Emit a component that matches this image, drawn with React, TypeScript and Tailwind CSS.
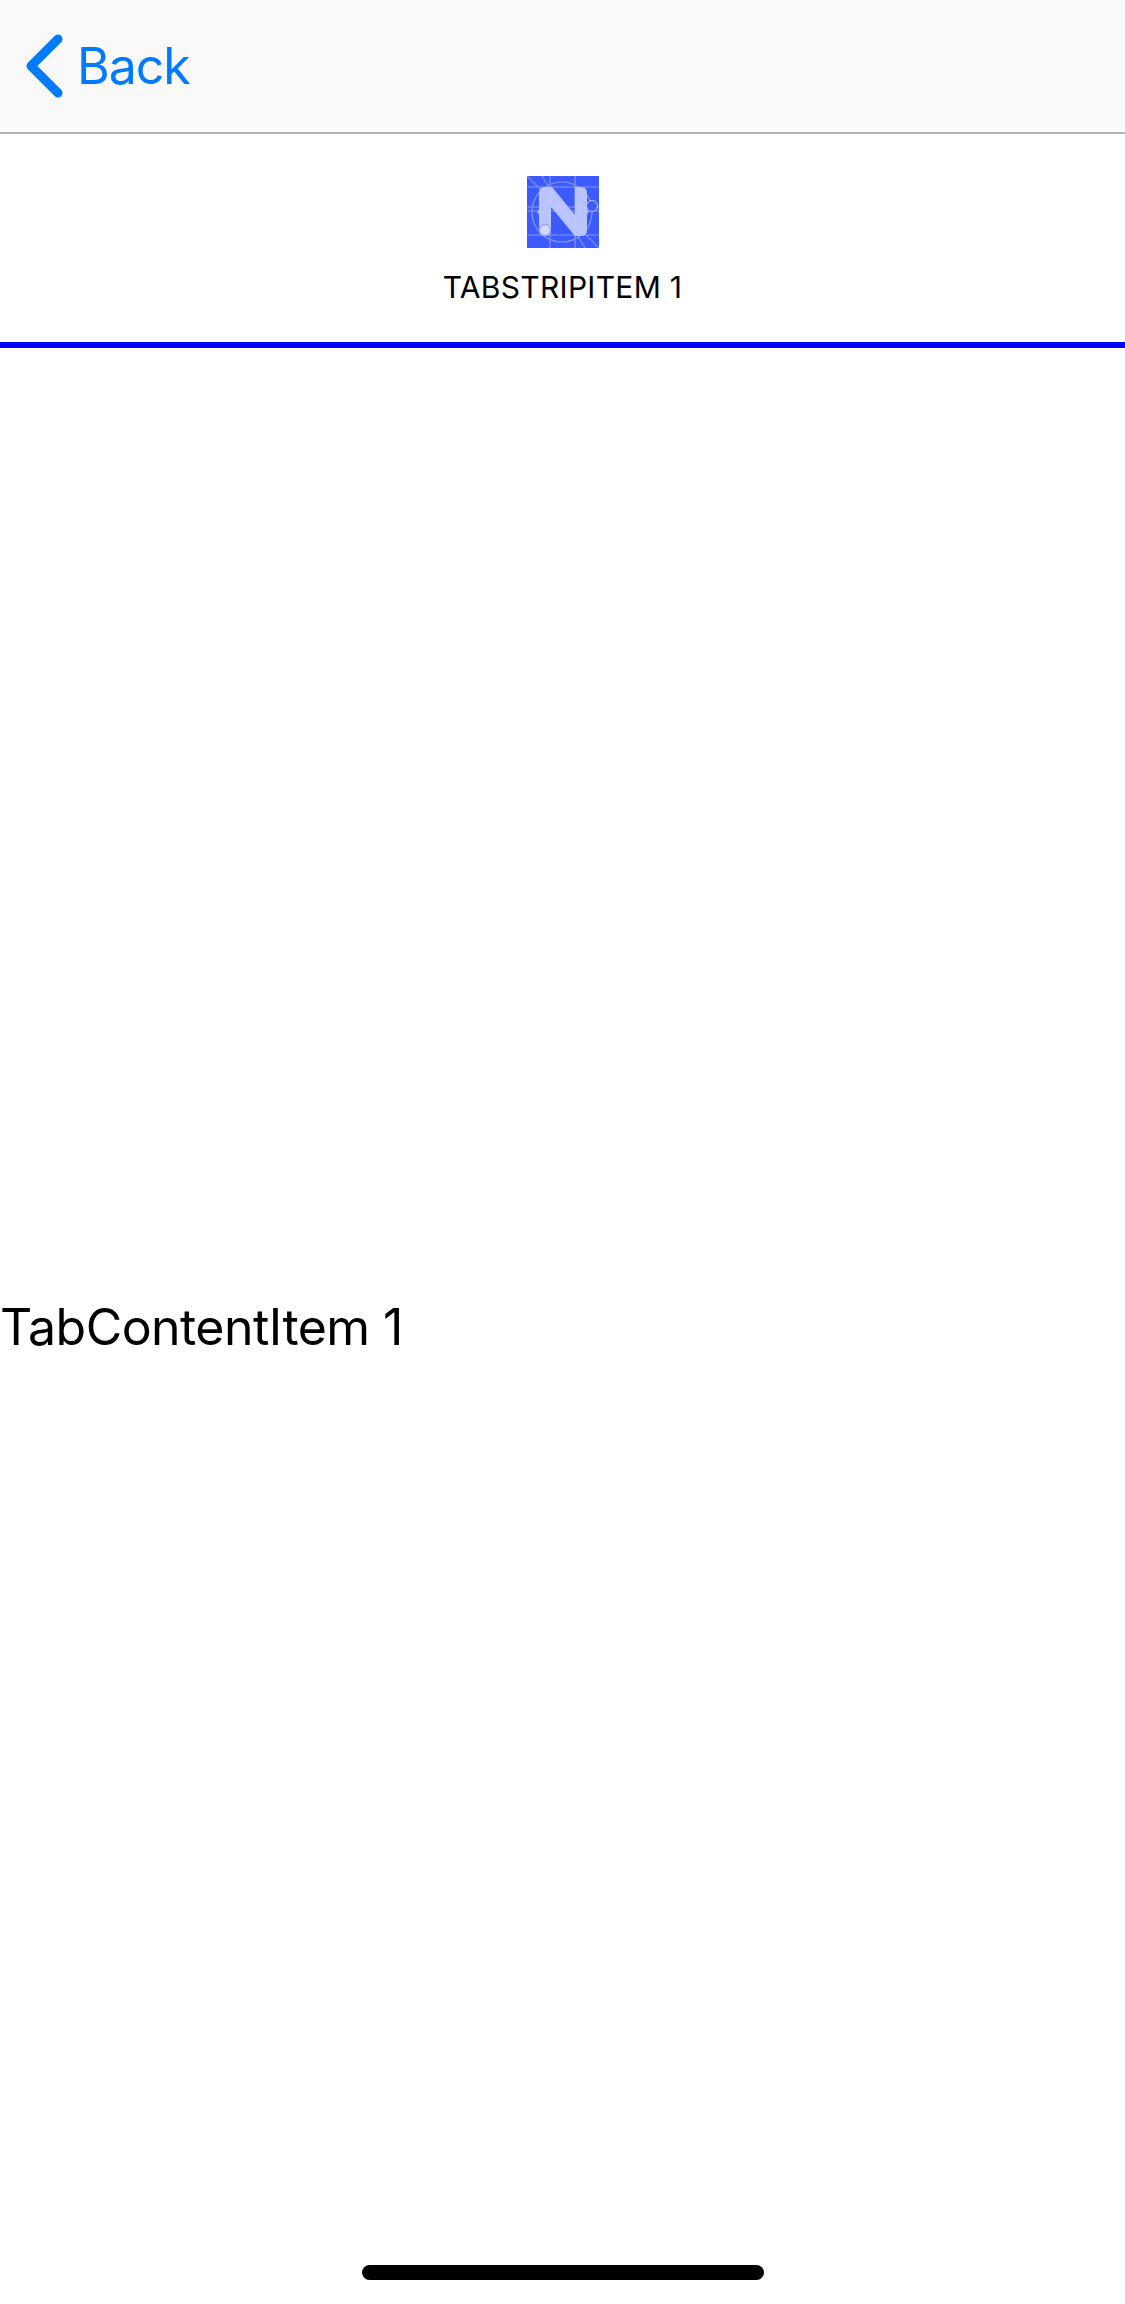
export default function App() {
  return (
    <div className="flex h-[2304px] w-[1125px] flex-col overflow-hidden bg-white font-['Inter','Liberation_Sans',sans-serif] text-black">
      <header className="flex h-[134px] shrink-0 items-center border-b-2 border-[#b2b2b2] bg-[#f9f9f9] pl-[26px]">
        <svg width="38" height="64" viewBox="0 0 38 64" className="shrink-0" aria-hidden="true">
          <path d="M32 5 L5 32 L32 59" fill="none" stroke="#007aff" strokeWidth="9" strokeLinecap="round" strokeLinejoin="round" />
        </svg>
        <span className="ml-[13px] text-[50px] leading-none tracking-[-1px] text-[#007aff]">Back</span>
      </header>
      <div className="flex h-[214px] shrink-0 flex-col items-center border-b-[6px] border-[#0000ff] pt-[42px]">
        <svg width="72" height="72" viewBox="0 0 72 72" className="shrink-0" aria-hidden="true">
          <rect width="72" height="72" fill="#3d5afe" />
          <g stroke="#8296ff" strokeWidth="1.2" fill="none">
            <path d="M0 11H72M0 31H72M0 35H72M0 59H72M23 0V72M48 0V72M0 0L72 72M15 0L58 72" />
            <circle cx="35" cy="36" r="30" />
          </g>
          <path d="M12 17Q12 11 18 11H25L48 39V11H54Q60 11 60 17V32Q60 36 63 36 60 36 60 40V54Q60 60 54 60H48L24 31V54Q24 60 18 60 12 60 12 54V40Q12 36 9 36 12 36 12 32Z" fill="#c2ccff" fillOpacity="0.92" />
          <circle cx="18" cy="54" r="5.5" fill="#d3daff" stroke="#8296ff" />
          <circle cx="65" cy="30" r="5.5" fill="#3d5afe" stroke="#c2ccff" />
        </svg>
        <span className="mt-[21px] text-[30px] leading-[36px] tracking-[0.3px]">TABSTRIPITEM 1</span>
      </div>
      <main className="flex flex-1 items-center pt-[41px]">
        <span className="text-[50px] leading-[60px] tracking-[-0.55px]">TabContentItem 1</span>
      </main>
      <div className="flex h-[39px] shrink-0 justify-center">
        <div className="h-[15px] w-[402px] rounded-full bg-black" />
      </div>
    </div>
  );
}
